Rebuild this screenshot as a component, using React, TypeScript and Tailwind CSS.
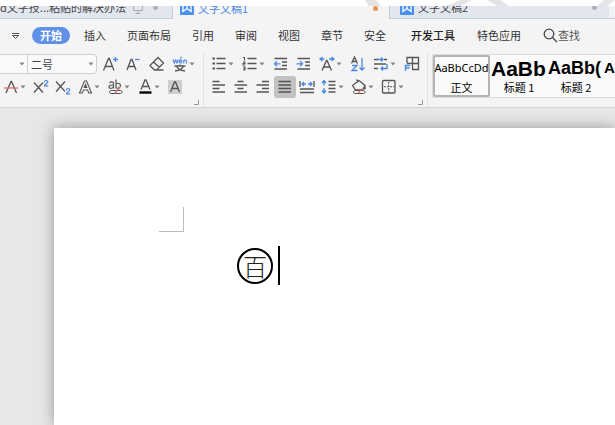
import type { ReactNode } from 'react';

const ink = '#555555';
const blue = '#4a86e0';
const cjk = "font-['Noto_Sans_CJK_SC',sans-serif]";

function Svg({ children }: { children: ReactNode }) {
  return (
    <svg width="16" height="16" viewBox="0 0 16 16" fill="none" stroke={ink} strokeWidth="1.3" className="shrink-0" aria-hidden="true">
      {children}
    </svg>
  );
}

function Caret() {
  return (
    <svg width="6" height="4" viewBox="0 0 6 4" className="shrink-0" aria-hidden="true">
      <path d="M0.5 0.5h5L3 3.5z" fill="#858585" />
    </svg>
  );
}

function Tool({ label, caret, active, children }: { label: string; caret?: boolean; active?: boolean; children: ReactNode }) {
  return (
    <button
      type="button"
      aria-label={label}
      aria-pressed={active}
      className={`flex h-[22px] shrink-0 items-center gap-px rounded-[3px] pl-[3px] ${caret ? 'w-[30px]' : 'w-[22px]'} ${active ? 'bg-[#c2c2c2]' : ''}`}
    >
      <Svg>{children}</Svg>
      {caret && <Caret />}
    </button>
  );
}

function WpsLogo() {
  return (
    <svg width="14" height="14" viewBox="0 0 14 14" className="shrink-0" aria-hidden="true">
      <rect width="14" height="14" rx="1" fill="#4b90ee" />
      <path d="M3 3v7.500l4-3l4 3V3M7 3v4.500" fill="none" stroke="#fff" strokeWidth="1.3" />
    </svg>
  );
}

function Tabs() {
  return (
    <header className="relative h-[19px] shrink-0 bg-[#e1e6ef]">
      <div role="tablist" className={`flex h-[19px] items-end overflow-hidden text-[11px] text-[#444] ${cjk}`}>
        <button type="button" role="tab" aria-selected="false" className="flex h-[22px] w-[173px] shrink-0 items-center border-r border-b border-[#c3cad8] whitespace-nowrap">
          <span className="w-[132px] text-left">d文字技...粘贴的解决办法</span>
          <svg width="12" height="12" viewBox="0 0 12 12" fill="none" stroke="#a5aab3" aria-hidden="true">
            <path d="M1.5 1.5h9v7h-9zM6 8.500v3M3.500 11.500h5" />
          </svg>
          <span className="ml-[9px] size-[5px] rounded-full bg-[#aeb2ba]" />
        </button>
        <button type="button" role="tab" aria-selected="true" className="flex h-[22px] w-[216px] shrink-0 items-center gap-[4px] bg-[#f4f4f4] pr-[11px] pl-[7px] text-[#4b86e6]">
          <WpsLogo />
          <span>文字文稿1</span>
          <span className="ml-auto size-[5px] rounded-full bg-[#e5954c]" />
        </button>
        <button type="button" role="tab" aria-selected="false" className="flex h-[22px] w-[220px] shrink-0 items-center gap-[4px] border-b border-l border-[#c3cad8] pr-[12px] pl-[10px]">
          <WpsLogo />
          <span>文字文稿2</span>
          <span className="ml-auto size-[5px] rounded-full bg-[#aeb2ba]" />
        </button>
        <div className="h-[22px] flex-1 border-b border-[#c3cad8] bg-[#f0f2f6]" />
      </div>
      <div className="absolute inset-x-0 top-0 h-[6px] overflow-hidden bg-white">
        <svg width="260" height="6" viewBox="0 0 260 6" className="ml-[355px]" fill="#e4e4e4" aria-hidden="true">
          <path d="M10 0h11l5 6H14zM106 0h11l-12 6H91zM132 0h13l9 6h-12zM249 0h11l-8 6h-10z" />
        </svg>
      </div>
    </header>
  );
}

function Menu() {
  return (
    <nav className={`flex h-[33px] shrink-0 items-center overflow-hidden text-[11px] whitespace-nowrap text-[#333] ${cjk}`}>
      <button type="button" aria-label="更多" className="mr-[12px] ml-[11px] shrink-0">
        <svg width="9" height="8" viewBox="0 0 9 8" fill="none" stroke="#555" aria-hidden="true">
          <path d="M1 1.5h7M1.5 3.5h6l-3 3z" />
        </svg>
      </button>
      <button type="button" className="mr-[14px] h-[17px] w-[38px] shrink-0 rounded-full bg-[#5f91e6] leading-[17px] font-bold text-white">开始</button>
      <div className="mr-[25px] flex gap-[21px]">
        {['插入', '页面布局', '引用', '审阅', '视图', '章节', '安全'].map((name) => (
          <button key={name} type="button">{name}</button>
        ))}
      </div>
      <div className="flex items-center gap-[22px]">
        <button type="button" className="font-medium text-[#222]">开发工具</button>
        <button type="button">特色应用</button>
        <button type="button" className="flex items-center text-[#555]">
          <svg width="15" height="15" viewBox="0 0 15 15" fill="none" stroke="#444" strokeWidth="1.3" aria-hidden="true">
            <circle cx="6" cy="6" r="4.8" />
            <path d="M9.5 9.5l4.5 4.5" />
          </svg>
          查找
        </button>
      </div>
    </nav>
  );
}

function Corner() {
  return (
    <svg width="5" height="5" viewBox="0 0 5 5" className="mt-px mr-[4px] ml-auto" fill="none" stroke="#999" aria-hidden="true">
      <path d="M4.5 0v4.5H0" />
    </svg>
  );
}

function FontGroup() {
  return (
    <section aria-label="字体" className="flex w-[204px] shrink-0 flex-col gap-px border-r border-[#e2e2e2]">
      <div className="flex h-[22px] items-center gap-px">
        <div className="mr-[2px] flex h-[20px] w-[97px] shrink-0 rounded-r border border-l-0 border-[#cfcfcf] bg-[#fafafa]">
          <button type="button" aria-label="字体名称" className="flex w-[28px] items-center justify-end border-r border-[#cfcfcf] pr-[2px]">
            <Caret />
          </button>
          <button type="button" aria-label="字号 二号" className={`flex flex-1 items-center justify-between pr-[2px] pl-[3px] text-[11px] leading-4 text-[#444] ${cjk}`}>
            二号
            <Caret />
          </button>
        </div>
        <Tool label="增大字号">
          <path d="M0.500 14.500L5.500 2.500h.8L11 14.500M2.500 10.500h7" />
          <path d="M12.500 1v5M10 3.500h5" stroke={blue} />
        </Tool>
        <Tool label="减小字号">
          <path d="M1 14L5 3.500h1L10 14M2.500 10.500h6" />
          <path d="M9 3.500h4.500" stroke={blue} />
        </Tool>
        <Tool label="清除格式">
          <path d="M1 9.500L9 1.500L14.500 7L7.500 14H5.500zM4.500 6L10.500 11.500M5.500 14h9" />
        </Tool>
        <Tool label="拼音指南" caret>
          <path d="M1 3.500l1.300 3.500L3.600 4L5 7L6 3.500M7 5.300h3C10 3.200 7 3.200 7 5.300S9 7.300 10 6.500M11.800 7.500V4M11.800 5c1-1.500 2.700-1 2.700.5v2M8.500 2.500l1-2" stroke={blue} strokeWidth="1.100" />
          <path d="M2.500 10h11M8 8.500v1.500M4.500 10c1 3 4 4.500 8.500 5M11.500 10c-1 3-4 4.500-8.500 5" />
        </Tool>
      </div>
      <div className="flex h-[22px]">
        <Tool label="删除线" caret>
          <path d="M3 14L8 2.500h.5L13.500 14" />
          <path d="M1 9h14" stroke="#df6b6b" />
        </Tool>
        <Tool label="上标">
          <path d="M1 3.500l9 10M10 3.500l-9 10" />
          <path d="M11.500 3.200C11.500 1 14.800 1 14.800 3C14.800 4.500 11.500 5 11.500 6.800h3.800" stroke={blue} strokeWidth="1.200" />
        </Tool>
        <Tool label="下标">
          <path d="M1 2.500l9 10M10 2.500l-9 10" />
          <path d="M11.500 11.200c0-2.200 3.300-2.200 3.300-.2c0 1.500-3.300 2-3.300 3.800h3.800" stroke={blue} strokeWidth="1.200" />
        </Tool>
        <Tool label="文字效果" caret>
          <path d="M2.500 14L7.500 2h2L14.500 14h-2.700L10.500 11h-4L5.200 14zM7.300 8.500L8.500 5.500L9.700 8.500z" strokeWidth="1.100" />
        </Tool>
        <Tool label="突出显示" caret>
          <path d="M2.500 4c1-1.500 4-1.500 4 .5V9.500M6.500 6C3.500 6 2 6.500 2 7.900C2 9.800 5.500 9.800 6.500 7.800M9 0.500V9.500M9 5.500c1-2 4.500-1.500 4.500 1S10 10 9 8.500" strokeWidth="1.200" />
          <path d="M4 11.500h9.500c2 0 2 3 0 3H4c-2 0-2-3 0-3z" strokeWidth="1" />
          <path d="M8 14l5-5.500" stroke="#df6b6b" />
        </Tool>
        <Tool label="字体颜色" caret>
          <path d="M4 10.500L8 1h1L13 10.500M5.500 7.500h6" />
          <path d="M2.500 13.500h12" stroke="#000" strokeWidth="2.400" />
        </Tool>
        <Tool label="字符底纹">
          <path d="M1 1h14v14H1z" fill="#cfcfcf" stroke="none" />
          <path d="M3.500 13L7.500 3h1L12.500 13M5 9.500h6" />
        </Tool>
      </div>
      <Corner />
    </section>
  );
}

function ParagraphGroup() {
  return (
    <section aria-label="段落" className="flex w-[224px] shrink-0 flex-col gap-px border-r border-[#e2e2e2] pl-[4px]">
      <div className="flex h-[22px] gap-px">
        <Tool label="项目符号" caret>
          <path d="M5.500 2.500h9M5.500 7.500h9M5.500 12.500h9" />
          <path d="M1.500 2.500h2.500M1.500 7.500h2.500M1.500 12.500h2.500" strokeWidth="2" />
        </Tool>
        <Tool label="编号" caret>
          <path d="M5.500 2.500h9M5.500 7.500h9M5.500 12.500h9" />
          <path d="M1 1.500h1.500V4.500M1 6h2v1.500H1V9h2.500M1 11h2v3H1M1.500 12.500H3" strokeWidth="1.100" />
        </Tool>
        <Tool label="减少缩进">
          <path d="M1.500 2.500h12.500M9 6h5M9 9.500h5M1.500 13h12.500" />
          <path d="M7.500 7.800h-6M4 5.200L1.500 7.800L4 10.400" stroke={blue} />
        </Tool>
        <Tool label="增加缩进">
          <path d="M1.500 2.500h12.500M9 6h5M9 9.500h5M1.500 13h12.500" />
          <path d="M0.500 7.800h6M4 5.200L6.500 7.800L4 10.400" stroke={blue} />
        </Tool>
        <Tool label="中文版式" caret>
          <path d="M3 14.500L7.500 4.500h.5L12.500 14.500M4.500 11h7" />
          <path d="M5.500 3h-4M3.500 1L1 3l2.500 2M10 3h4M12.500 1L15 3l-2.500 2" stroke={blue} />
        </Tool>
        <Tool label="排序">
          <path d="M1.500 7.500L4.500 1L7.500 7.500M2.500 5.500h4" />
          <path d="M2 9.500h5L2 14.500h5.500M12 2v12M9.500 11.500l2.500 2.500l2.500-2.500" stroke={blue} />
        </Tool>
        <Tool label="换行" caret>
          <path d="M1 3.500h4M1 8h12M1 12.500h4M11 3.500h3" />
          <path d="M5 3.500h5M8 1.500l2 2l-2 2M14 8v4.500H8M10 10.500l-2 2l2 2" stroke={blue} />
        </Tool>
        <Tool label="制表位">
          <path d="M3 7V1.500h11.500v12H8M3 7.500h11.500M8.500 1.500v12" />
          <path d="M1.500 15V9.500H6M1.500 12h4" stroke={blue} />
        </Tool>
      </div>
      <div className="flex h-[22px]">
        <Tool label="左对齐"><path d="M1.500 2.500h7M1.500 6h12.500M1.500 9.500h7M1.500 13h12.500" /></Tool>
        <Tool label="居中"><path d="M4.500 2.500h6M1.500 6h12.500M4.500 9.500h6M1.500 13h12.500" /></Tool>
        <Tool label="右对齐"><path d="M7 2.500h7M1.500 6h12.500M7 9.500h7M1.500 13h12.500" /></Tool>
        <Tool label="两端对齐" active><path d="M1.500 2.500h12.500M1.500 6h12.500M1.500 9.500h12.500M1.500 13h12.500" /></Tool>
        <Tool label="分散对齐">
          <path d="M1 2v6M15 2v6M1 10h14M1 13.500h14" />
          <path d="M7 5H3M5 3L3 5l2 2M9 5h4M11 3l2 2l-2 2" stroke={blue} />
        </Tool>
        <Tool label="行距" caret>
          <path d="M7.500 2.500h7M7.500 6h7M7.500 9.500h7M7.500 13h7" />
          <path d="M3 1.500v5M1 4l2-2.500L5 4M3 9v5M1 11.500L3 14l2-2.500" stroke={blue} />
        </Tool>
        <Tool label="底纹颜色" caret>
          <path d="M1.500 6.500L8 1.500L14 6.500L11.500 11H4.500zM5.500 0.500l2 2.500M14 7v3.500" />
          <path d="M4 11.500h8.500c2 0 2 3 0 3H4c-2 0-2-3 0-3z" strokeWidth="1" />
          <path d="M7 14l4-4" stroke="#df6b6b" />
        </Tool>
        <Tool label="边框" caret>
          <rect x="1.500" y="1.500" width="12.500" height="12.500" rx="1" />
          <path d="M7.750 3v10M3 7.750h10" strokeDasharray="2 1" strokeWidth="1" />
        </Tool>
      </div>
      <Corner />
    </section>
  );
}

const styles = [
  { name: '正文', preview: 'AaBbCcDd', look: "text-[11px] font-['Noto_Sans',sans-serif]" },
  { name: '标题 1', preview: 'AaBb', look: "text-[21px] font-bold font-['Liberation_Sans',sans-serif]" },
  { name: '标题 2', preview: 'AaBb(', look: "text-[18px] font-bold font-['Liberation_Sans',sans-serif]" },
];

function StyleGallery() {
  return (
    <section aria-label="样式" className="mt-px ml-[4px] flex h-[44px] min-w-0 flex-1 overflow-hidden border border-r-0 border-[#dcdcdc] bg-[#fafafa] text-black">
      {styles.map((style, i) => (
        <button
          key={style.name}
          type="button"
          className={`flex h-[42px] w-[57px] shrink-0 flex-col whitespace-nowrap ${i === 0 ? 'items-center rounded-[2px] border-2 border-[#b4b4b4]' : 'items-start border-y-2 border-l border-transparent'}`}
        >
          <span className={`flex h-[23px] shrink-0 items-center ${style.look}`}>{style.preview}</span>
          <span className={`w-full text-center text-[11px] leading-[14px] ${cjk}`}>{style.name}</span>
        </button>
      ))}
      <button type="button" className="flex h-[42px] shrink-0 flex-col border-y-2 border-transparent">
        <span className="flex h-[23px] items-center font-['Liberation_Sans',sans-serif] text-[15px] font-bold">A</span>
      </button>
    </section>
  );
}

export default function App() {
  return (
    <div className="flex h-screen flex-col overflow-hidden bg-[#e7e7e7]">
      <Tabs />
      <div className="shrink-0 border-b border-[#d6d6d6] bg-[#f4f4f4]">
        <Menu />
        <div className="flex h-[55px] overflow-hidden pt-px">
          <FontGroup />
          <ParagraphGroup />
          <StyleGallery />
        </div>
      </div>
      <main className="flex flex-1 overflow-hidden pt-[20px] pl-[54px]">
        <article className="flex-1 bg-white pt-[79px] pl-[105px] shadow-[0_0_14px_rgba(0,0,0,0.35)]">
          <div className="size-[25px] border-r border-b border-[#bdbdbd]" />
          <div className="mt-[14px] ml-[78px] flex items-center gap-[5px]">
            <span className={`flex size-[36px] items-center justify-center rounded-full border-2 border-black text-[24px] leading-none font-light text-[#222] ${cjk}`}>百</span>
            <span className="h-[39px] w-[2px] bg-black" />
          </div>
        </article>
      </main>
    </div>
  );
}
